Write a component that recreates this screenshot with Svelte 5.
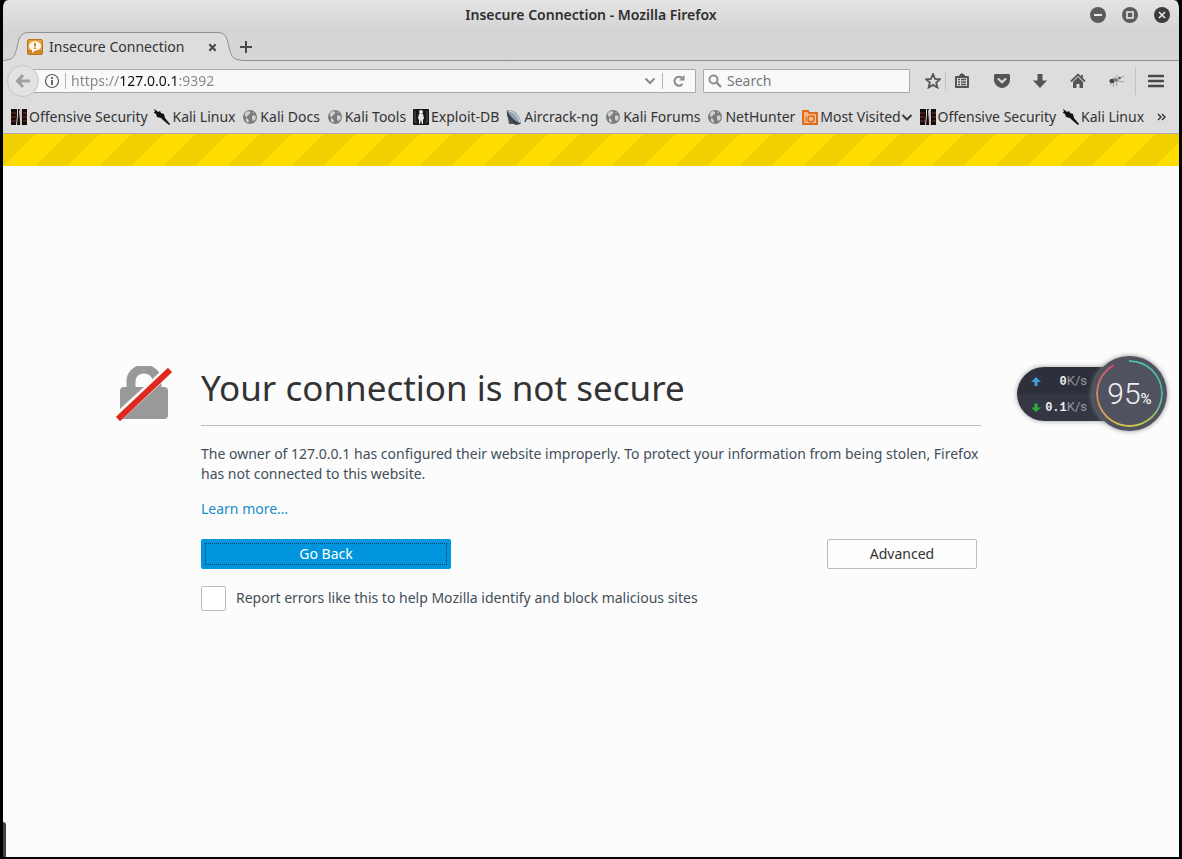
<script lang="ts">
	type Icon = 'offsec' | 'kali' | 'globe' | 'exploit' | 'dish' | 'folder';

	interface Bookmark {
		title: string;
		icon: Icon;
		menu?: boolean;
	}

	const bookmarks: Bookmark[] = [
		{ title: 'Offensive Security', icon: 'offsec' },
		{ title: 'Kali Linux', icon: 'kali' },
		{ title: 'Kali Docs', icon: 'globe' },
		{ title: 'Kali Tools', icon: 'globe' },
		{ title: 'Exploit-DB', icon: 'exploit' },
		{ title: 'Aircrack-ng', icon: 'dish' },
		{ title: 'Kali Forums', icon: 'globe' },
		{ title: 'NetHunter', icon: 'globe' },
		{ title: 'Most Visited', icon: 'folder', menu: true },
		{ title: 'Offensive Security', icon: 'offsec' },
		{ title: 'Kali Linux', icon: 'kali' }
	];

	let url = $state('https://127.0.0.1:9392');
	let query = $state('');
	let report = $state(false);
</script>

{#snippet bookmarkIcon(name: Icon)}
	<svg class="favicon" viewBox="0 0 16 16" aria-hidden="true">
		{#if name === 'offsec'}
			<rect width="16" height="16" fill="#160c0c" />
			<path d="M0 4h5M0 8h5M0 12h5M12 4h4M12 8h4M12 12h4" stroke="#5c2323" stroke-width="1.5" />
			<path d="M6 0h1v6l-1 10H5l1-9z" fill="#dcd6d6" />
			<path d="M8 2l1-2h2v16H9z" fill="#c9c2c2" />
			<path d="M8 5l1 11H7z" fill="#160c0c" />
		{:else if name === 'kali'}
			<path d="M0 0l3 2 1 1 2-1 1 2 3 1 1 4 5 6-1 1-6-5-2-2-4-1-1-3-3-2 2 0z" fill="#111" />
		{:else if name === 'globe'}
			<circle cx="8" cy="8" r="7" fill="#7c7c7c" />
			<path d="M3 4l3-2 2 1 0 2-2 1-1 2-2-1zM10 7l2-1 2 2-1 3-2 1-1-2zM4 9l2 1 1 2-1 2-2-2zM11 3l1 1-2 0z" fill="#d0d0d0" />
		{:else if name === 'exploit'}
			<rect width="16" height="16" rx="1" fill="#181818" />
			<ellipse cx="8" cy="3" rx="2" ry="2" fill="#e8e8e8" />
			<path d="M6 5h4l1 4-1 2v4H9l-1-4-1 4H6v-4L5 9z" fill="#e8e8e8" />
			<path d="M2 2v11h2M14 2v11h-2" fill="none" stroke="#555" />
		{:else if name === 'dish'}
			<path d="M1 1c5 0 12 6 14 14l-5 1C4 14 0 8 1 1z" fill="#3a4147" />
			<path d="M1 1c7-1 14 5 14 14C9 12 3 7 1 1z" fill="#93a3b3" />
			<path d="M3 2c5 1 9 5 11 11" fill="none" stroke="#dfe7ee" />
			<path d="M2 9l1 6h6z" fill="#4d555b" />
		{:else}
			<path d="M1 2h5l1 2h8v11H1z" fill="#f7b98a" stroke="#dd6d1d" stroke-width="2" />
			<circle cx="9" cy="10" r="3" fill="none" stroke="#dd6d1d" stroke-width="1.5" />
			<path d="M4 7v6M11 6l2 2" stroke="#dd6d1d" />
		{/if}
	</svg>
{/snippet}

<div class="window">
	<header class="titlebar">
		<h1 class="window-title">Insecure Connection - Mozilla Firefox</h1>
		<div class="window-buttons">
			<button aria-label="Minimize">
				<svg viewBox="0 0 16 16"><circle cx="8" cy="8" r="8" /><path d="M4 8h8" stroke-width="2" /></svg>
			</button>
			<button aria-label="Maximize">
				<svg viewBox="0 0 16 16"><circle cx="8" cy="8" r="8" /><rect x="5" y="5" width="6" height="6" fill="none" stroke-width="1.6" /></svg>
			</button>
			<button aria-label="Close">
				<svg viewBox="0 0 16 16"><circle class="dark" cx="8" cy="8" r="8" /><path d="M5 5l6 6M11 5l-6 6" stroke-width="1.6" /></svg>
			</button>
		</div>
	</header>

	<div class="tabs">
		<div class="tab">
			<svg class="tab-curve" viewBox="0 0 24 29" aria-hidden="true">
				<path class="fill" d="M0 29V28C9 28 10 23 12 15 14 6 15 1 24 .5V29z" />
				<path class="line" d="M0 28C9 28 10 23 12 15 14 6 15 .5 24 .5" />
			</svg>
			<div class="tab-body">
				<svg class="favicon" viewBox="0 0 16 16" aria-hidden="true">
					<rect x=".5" y=".5" width="15" height="15" rx="1.5" fill="#eaa13c" stroke="#bd7419" />
					<path d="M1 11h14v4H1z" fill="#d4872a" />
					<path d="M8 2.500c3.500 0 6 1.800 6 4.500s-2.500 4.500-6 4.500L5 14v-3C3 10.300 2 9 2 7c0-2.700 2.500-4.500 6-4.500z" fill="#fff8ea" />
					<path d="M8 4v3.500M8 8.500v1.500" stroke="#b06c1c" stroke-width="1.600" />
				</svg>
				<span class="tab-title">Insecure Connection</span>
				<button class="tab-close" aria-label="Close tab">
					<svg viewBox="0 0 10 10"><path d="M1.500 1.500l7 7M8.500 1.500l-7 7" stroke="#4a4a4a" stroke-width="2.400" /></svg>
				</button>
			</div>
			<svg class="tab-curve" viewBox="0 0 24 29" aria-hidden="true">
				<path class="fill" d="M24 29V28C15 28 14 23 12 15 10 6 9 1 0 .5V29z" />
				<path class="line" d="M24 28C15 28 14 23 12 15 10 6 9 .5 0 .5" />
			</svg>
		</div>
		<button class="new-tab" aria-label="New tab">
			<svg viewBox="0 0 12 12"><path d="M6 0v12M0 6h12" stroke="#4a4a4a" stroke-width="2" /></svg>
		</button>
	</div>

	<nav class="toolbar">
		<button class="back" aria-label="Back">
			<svg viewBox="0 0 16 16"><path d="M8 2L2.500 8 8 14M3 8h12" fill="none" stroke="#a0a0a0" stroke-width="3" /></svg>
		</button>
		<div class="urlbar">
			<button class="identity" aria-label="Site information">
				<svg viewBox="0 0 16 16">
					<circle cx="8" cy="8" r="6.500" fill="none" stroke="#5a5a5a" stroke-width="1.200" />
					<path d="M8 7v5M8 4v2" stroke="#5a5a5a" stroke-width="1.800" />
				</svg>
			</button>
			<input class="url" type="text" aria-label="Address" bind:value={url} />
			<button class="history" aria-label="Show history">
				<svg viewBox="0 0 12 12"><path d="M1.500 3.500L6 8l4.500-4.500" fill="none" stroke="#8a8a8a" stroke-width="2" /></svg>
			</button>
			<button class="reload" aria-label="Reload">
				<svg viewBox="0 0 14 14">
					<path d="M10.500 10A4.500 4.500 0 1 1 10 3.800" fill="none" stroke="#8a8a8a" stroke-width="2" />
					<path d="M12.500 1v5.500H7z" fill="#8a8a8a" />
				</svg>
			</button>
		</div>
		<div class="searchbar">
			<svg viewBox="0 0 14 14" aria-hidden="true">
				<circle cx="5.500" cy="5.500" r="4" fill="none" stroke="#8f8f8f" stroke-width="2" />
				<path d="M8.500 8.500l4.500 4.500" stroke="#8f8f8f" stroke-width="2.400" />
			</svg>
			<input type="text" aria-label="Search" placeholder="Search" bind:value={query} />
		</div>
		<div class="tools">
			<button class="star" aria-label="Bookmark this page">
				<svg viewBox="0 0 16 16"><path d="M8 1.200l2 4.600 5 .5-3.800 3.300 1.200 4.900L8 11.900l-4.400 2.600 1.200-4.900L1 6.300l5-.5z" fill="none" stroke="#555" stroke-width="1.800" /></svg>
			</button>
			<button class="library" aria-label="Show your bookmarks">
				<svg viewBox="0 0 16 16">
					<path d="M2 4h12v10H2z" fill="none" stroke="#555" stroke-width="2" stroke-linejoin="round" />
					<path d="M5 3l2-2h2l2 2z" fill="#555" stroke="#555" />
					<path d="M4 6.500h2M7 6.500h5M4 9h2M7 9h5M4 11.500h2M7 11.500h5" stroke="#555" stroke-width="1.300" />
				</svg>
			</button>
			<button aria-label="Save to Pocket">
				<svg viewBox="0 0 16 16">
					<path d="M1 1h14l1 1v5c0 4-4 8-8 8S0 11 0 7V2z" fill="#555" />
					<path d="M4.500 6L8 9.300 11.500 6" fill="none" stroke="#ddd" stroke-width="2" stroke-linecap="round" />
				</svg>
			</button>
			<button aria-label="Downloads">
				<svg viewBox="0 0 16 16"><path d="M5.500 1h5v6.500H15L8 15 1 7.500h4.500z" fill="#555" /></svg>
			</button>
			<button aria-label="Home">
				<svg viewBox="0 0 16 16">
					<path d="M1 8.500l7-7 7 7" fill="none" stroke="#555" stroke-width="1.800" />
					<path d="M3 9l5-5 5 5v6H9.500v-4h-3v4H3zM11 2h2v3l-2-2z" fill="#555" />
				</svg>
			</button>
			<button aria-label="Firebug">
				<svg viewBox="0 0 16 16">
					<path d="M1 8l5-3 3 1M2 12l3-3M5 14l1-4M9 13L8 8M9 8l7 1M10 6l6-3M7 5l3-3" fill="none" stroke="#a2a2a2" />
					<ellipse cx="4" cy="8" rx="2.500" ry="2.200" fill="#444" />
					<ellipse cx="8" cy="7" rx="2.400" ry="1.500" fill="#777" />
					<circle cx="11.500" cy="5" r="1.300" fill="#555" />
				</svg>
			</button>
			<button class="menu" aria-label="Open menu">
				<svg viewBox="0 0 16 16"><path d="M1 3h14M1 8h14M1 13h14" stroke="#4a4a4a" stroke-width="2.600" stroke-linecap="round" /></svg>
			</button>
		</div>
	</nav>

	<nav class="bookmarks" aria-label="Bookmarks">
		{#each bookmarks as bookmark}
			<a class="bookmark" href="#top">
				{@render bookmarkIcon(bookmark.icon)}
				<span>{bookmark.title}</span>
				{#if bookmark.menu}
					<svg class="chevron" viewBox="0 0 12 12" aria-hidden="true"><path d="M1.500 4L6 8.500 10.500 4" fill="none" stroke="#3a3a3a" stroke-width="2" /></svg>
				{/if}
			</a>
		{/each}
		<button class="overflow" aria-label="More bookmarks">
			<svg viewBox="0 0 10 8"><path d="M1 1l3 3-3 3M5 1l3 3-3 3" fill="none" stroke="#333" stroke-width="1.400" /></svg>
		</button>
	</nav>

	<div class="stripes"></div>

	<main class="page">
		<section class="error">
			<div class="error-title">
				<svg class="lock" viewBox="0 0 56 56" aria-hidden="true">
					<path d="M15 24V15a13 12 0 0 1 26 0v9" fill="none" stroke="#999" stroke-width="9" />
					<rect x="4" y="21" width="48" height="32" rx="4" fill="#999" />
					<path d="M0 53L56 1" stroke="#fcfcfc" stroke-width="9" />
					<path d="M2 53L54 4" stroke="#dc2a1f" stroke-width="6" />
				</svg>
				<h2>Your connection is not secure</h2>
			</div>
			<p>
				The owner of 127.0.0.1 has configured their website improperly. To protect your information
				from being stolen, Firefox has not connected to this website.
			</p>
			<p><a class="learn" href="#top">Learn more…</a></p>
			<div class="actions">
				<button class="primary"><span>Go Back</span></button>
				<button class="secondary">Advanced</button>
			</div>
			<label class="report">
				<input type="checkbox" bind:checked={report} />
				<span>Report errors like this to help Mozilla identify and block malicious sites</span>
			</label>
		</section>
	</main>

	<aside class="monitor">
		<div class="rates">
			<div class="rate">
				<svg viewBox="0 0 10 10" aria-hidden="true"><path d="M5 0l5 5H6.500v4h-3V5H0z" fill="#3fa0d8" /></svg>
				<span><b>0</b>K/s</span>
			</div>
			<div class="rate">
				<svg viewBox="0 0 10 10" aria-hidden="true"><path d="M5 9L0 4.500h3.500v-4h3v4H10z" fill="#2fae3d" /></svg>
				<span><b>0.1</b>K/s</span>
			</div>
		</div>
		<div class="gauge">
			<div class="gauge-ring"></div>
			<span class="gauge-value">95</span><span class="gauge-unit">%</span>
		</div>
	</aside>

	<div class="dock-handle"></div>
</div>

<style>
	:global(body) {
		background: #000;
	}

	.window {
		position: relative;
		box-sizing: border-box;
		min-height: 100vh;
		display: flex;
		flex-direction: column;
		border: solid #000;
		border-width: 0 3px 2px;
		border-radius: 8px 8px 0 0;
		background: linear-gradient(#e4e4e4, #d4d4d4 32px, #d6d6d6 60px, #ddd 61px);
		color: #333;
		font: 14px/20px 'Noto Sans', 'Open Sans', sans-serif;
	}

	button {
		display: flex;
		align-items: center;
		justify-content: center;
		padding: 0;
		border: 0;
		background: none;
		color: inherit;
		font: inherit;
	}

	svg {
		display: block;
		flex: none;
	}

	.titlebar {
		display: grid;
		grid-template-columns: 1fr auto 1fr;
		align-items: center;
		height: 32px;
		padding: 0 9px 2px;
		box-sizing: border-box;
	}

	.window-title {
		grid-column: 2;
		margin: 0;
		font-size: 14px;
		line-height: 20px;
		font-weight: 600;
		color: #2e2e2e;
	}

	.window-buttons {
		display: flex;
		justify-content: flex-end;
		gap: 16px;
	}

	.window-buttons svg {
		width: 16px;
		height: 16px;
		fill: #5c5c5c;
		stroke: #e8e8e8;
	}

	.window-buttons circle {
		stroke: none;
	}

	.window-buttons .dark {
		fill: #3c3c3c;
	}

	.tabs {
		display: flex;
		align-items: flex-end;
		height: 29px;
		padding-left: 2px;
		box-shadow: inset 0 -1px #8f8f8f;
	}

	.tab {
		display: flex;
		height: 29px;
	}

	.tab-curve {
		width: 24px;
		height: 29px;
	}

	.fill {
		fill: #ddd;
	}

	.line {
		fill: none;
		stroke: #8f8f8f;
	}

	.tab-body {
		display: flex;
		align-items: center;
		width: 188px;
		box-sizing: border-box;
		border-top: 1px solid #8f8f8f;
		background: #ddd;
	}

	.favicon {
		width: 16px;
		height: 16px;
	}

	.tab-body .favicon {
		margin-left: -2px;
	}

	.tab-title {
		flex: 1;
		margin-left: 6px;
		white-space: nowrap;
	}

	.tab-close svg {
		width: 9px;
		height: 9px;
	}

	.new-tab {
		width: 24px;
		height: 28px;
		margin-left: -7px;
	}

	.new-tab svg {
		width: 12px;
		height: 12px;
	}

	.toolbar {
		display: flex;
		align-items: center;
		height: 40px;
		padding: 0 4px;
	}

	.back {
		z-index: 1;
		width: 32px;
		height: 32px;
		border: 1px solid #c6c6c6;
		border-radius: 50%;
		background: #e2e2e2;
	}

	.back svg {
		width: 16px;
		height: 16px;
	}

	.urlbar,
	.searchbar {
		display: flex;
		align-items: center;
		box-sizing: border-box;
		height: 24px;
		border: 1px solid #a9a9a9;
		border-radius: 1px;
		background: #f9f9f9;
	}

	.urlbar {
		flex: 1;
		min-width: 0;
		margin-left: -8px;
		padding-left: 12px;
	}

	.identity {
		padding-right: 5px;
		border-right: 1px solid #b5b5b5;
	}

	.identity svg {
		width: 16px;
		height: 16px;
	}

	.url {
		flex: 1;
		min-width: 0;
		margin-left: 5px;
		padding: 0;
		border: 0;
		outline: 0;
		font: inherit;
		color: transparent;
		caret-color: #222;
		/* the scheme and the port are dimmed, the host is dark */
		background: linear-gradient(90deg, #858585 48px, #111 48px, #111 108px, #858585 108px);
		background-clip: text;
		-webkit-background-clip: text;
	}

	.history {
		width: 26px;
		height: 16px;
		border-right: 1px solid #b5b5b5;
	}

	.history svg {
		width: 12px;
		height: 12px;
	}

	.reload {
		width: 32px;
	}

	.reload svg {
		width: 14px;
		height: 14px;
	}

	.searchbar {
		width: 207px;
		margin-left: 7px;
		padding-left: 4px;
	}

	.searchbar svg {
		width: 14px;
		height: 14px;
	}

	.searchbar input {
		flex: 1;
		min-width: 0;
		margin-left: 5px;
		padding: 0;
		border: 0;
		outline: 0;
		background: none;
		color: #333;
		font: inherit;
	}

	.searchbar input::placeholder {
		color: #777;
		opacity: 1;
	}

	.tools {
		display: flex;
		align-items: center;
		margin-left: 10px;
	}

	.tools button {
		width: 38px;
		height: 28px;
	}

	.tools svg {
		width: 16px;
		height: 16px;
	}

	.tools .star {
		width: 25px;
	}

	.tools .library {
		padding-right: 6px;
		height: 20px;
		border-left: 1px solid #c2c2c2;
	}

	.tools .menu {
		width: 40px;
		border-left: 1px solid #c2c2c2;
	}

	.bookmarks {
		display: flex;
		align-items: center;
		justify-content: space-between;
		height: 32px;
		padding: 0 12px 0 8px;
		border-bottom: 1px solid #b3a5b3;
	}

	.bookmark {
		display: flex;
		align-items: center;
		gap: 2px;
		color: #333;
		font-size: 14px;
		white-space: nowrap;
		text-decoration: none;
	}

	.chevron {
		width: 12px;
		height: 12px;
		margin-left: -2px;
	}

	.overflow {
		margin-left: 6px;
	}

	.overflow svg {
		width: 10px;
		height: 8px;
	}

	.stripes {
		height: 32px;
		background: linear-gradient(
			-45deg,
			#f0d000 33%,
			#fedc00 33%,
			#fedc00 66%,
			#f0d000 66%
		);
		background-size: 64px 32px;
	}

	.page {
		flex: 1;
		display: flex;
		align-items: center;
		justify-content: center;
		padding-bottom: 50px;
		background: #fcfcfc;
		color: #424f5a;
		font-size: 14px;
	}

	.error {
		width: 100%;
		max-width: 780px;
	}

	.error-title {
		display: flex;
		align-items: center;
		gap: 29px;
		margin-left: -85px;
	}

	.lock {
		width: 56px;
		height: 56px;
	}

	.error-title h2 {
		flex: 1;
		margin: 0;
		padding-bottom: 13px;
		border-bottom: 1px solid #b9bcbe;
		color: #333;
		font-size: 35px;
		line-height: 49px;
		font-weight: 400;
	}

	.error p {
		margin: 0 0 15px;
	}

	.error-title + p {
		margin-top: 18px;
	}

	.learn {
		color: #1a8cc8;
		text-decoration: none;
	}

	.actions {
		display: flex;
		justify-content: space-between;
		margin: 20px 4px 17px 0;
	}

	.actions button {
		box-sizing: border-box;
		height: 30px;
		border-radius: 2px;
	}

	.actions .primary {
		width: 250px;
		padding: 4px;
		background: #0095dd;
		color: #fff;
	}

	.primary span {
		flex: 1;
		border: 1px dotted #063c66;
	}

	.actions .secondary {
		width: 150px;
		border: 1px solid #bcbcbc;
		background: #fdfdfd;
		color: #333;
	}

	.report {
		display: flex;
		align-items: center;
		gap: 10px;
	}

	.report input {
		appearance: none;
		box-sizing: border-box;
		width: 25px;
		height: 25px;
		margin: 0;
		border: 1px solid #bcbcbc;
		border-radius: 2px;
		background: #fff;
	}

	.report input:checked {
		background: #0095dd;
	}

	.monitor {
		position: absolute;
		top: 356px;
		right: 12px;
		display: flex;
		align-items: center;
	}

	.rates {
		box-sizing: border-box;
		width: 100px;
		height: 54px;
		margin-right: -25px;
		padding: 2px 30px 0 14px;
		border-radius: 27px 0 0 27px;
		background: linear-gradient(#2d2f3b 50%, #343743 50%);
		box-shadow: 0 0 5px #9a9a9a;
		color: #9699a3;
		font: 13px/26px Roboto, sans-serif;
	}

	.rate {
		display: flex;
		align-items: center;
		justify-content: space-between;
		height: 26px;
	}

	.rate svg {
		width: 10px;
		height: 10px;
	}

	.rate b {
		color: #eee;
		font: bold 12px/26px 'Liberation Mono', monospace;
	}

	.gauge {
		position: relative;
		display: flex;
		align-items: baseline;
		justify-content: center;
		box-sizing: border-box;
		width: 75px;
		height: 75px;
		border-radius: 50%;
		background: #50535f;
		box-shadow: 0 0 5px #888;
		color: #f0f0f0;
		font: 300 30px/75px Roboto, sans-serif;
	}

	.gauge-ring {
		position: absolute;
		inset: 4px;
		border-radius: 50%;
		background: conic-gradient(
			#4cc5b0,
			#45b89c 25%,
			#c9cc4e 45%,
			#d6c04e 55%,
			#d68a5c 75%,
			#d9486f 92%,
			transparent 92%
		);
		mask: radial-gradient(circle, transparent 31px, #000 32px);
	}

	.gauge-unit {
		font-size: 15px;
		font-weight: 500;
	}

	.dock-handle {
		position: absolute;
		left: 0;
		bottom: 0;
		width: 3px;
		height: 35px;
		border-radius: 0 3px 0 0;
		background: #444;
	}
</style>
